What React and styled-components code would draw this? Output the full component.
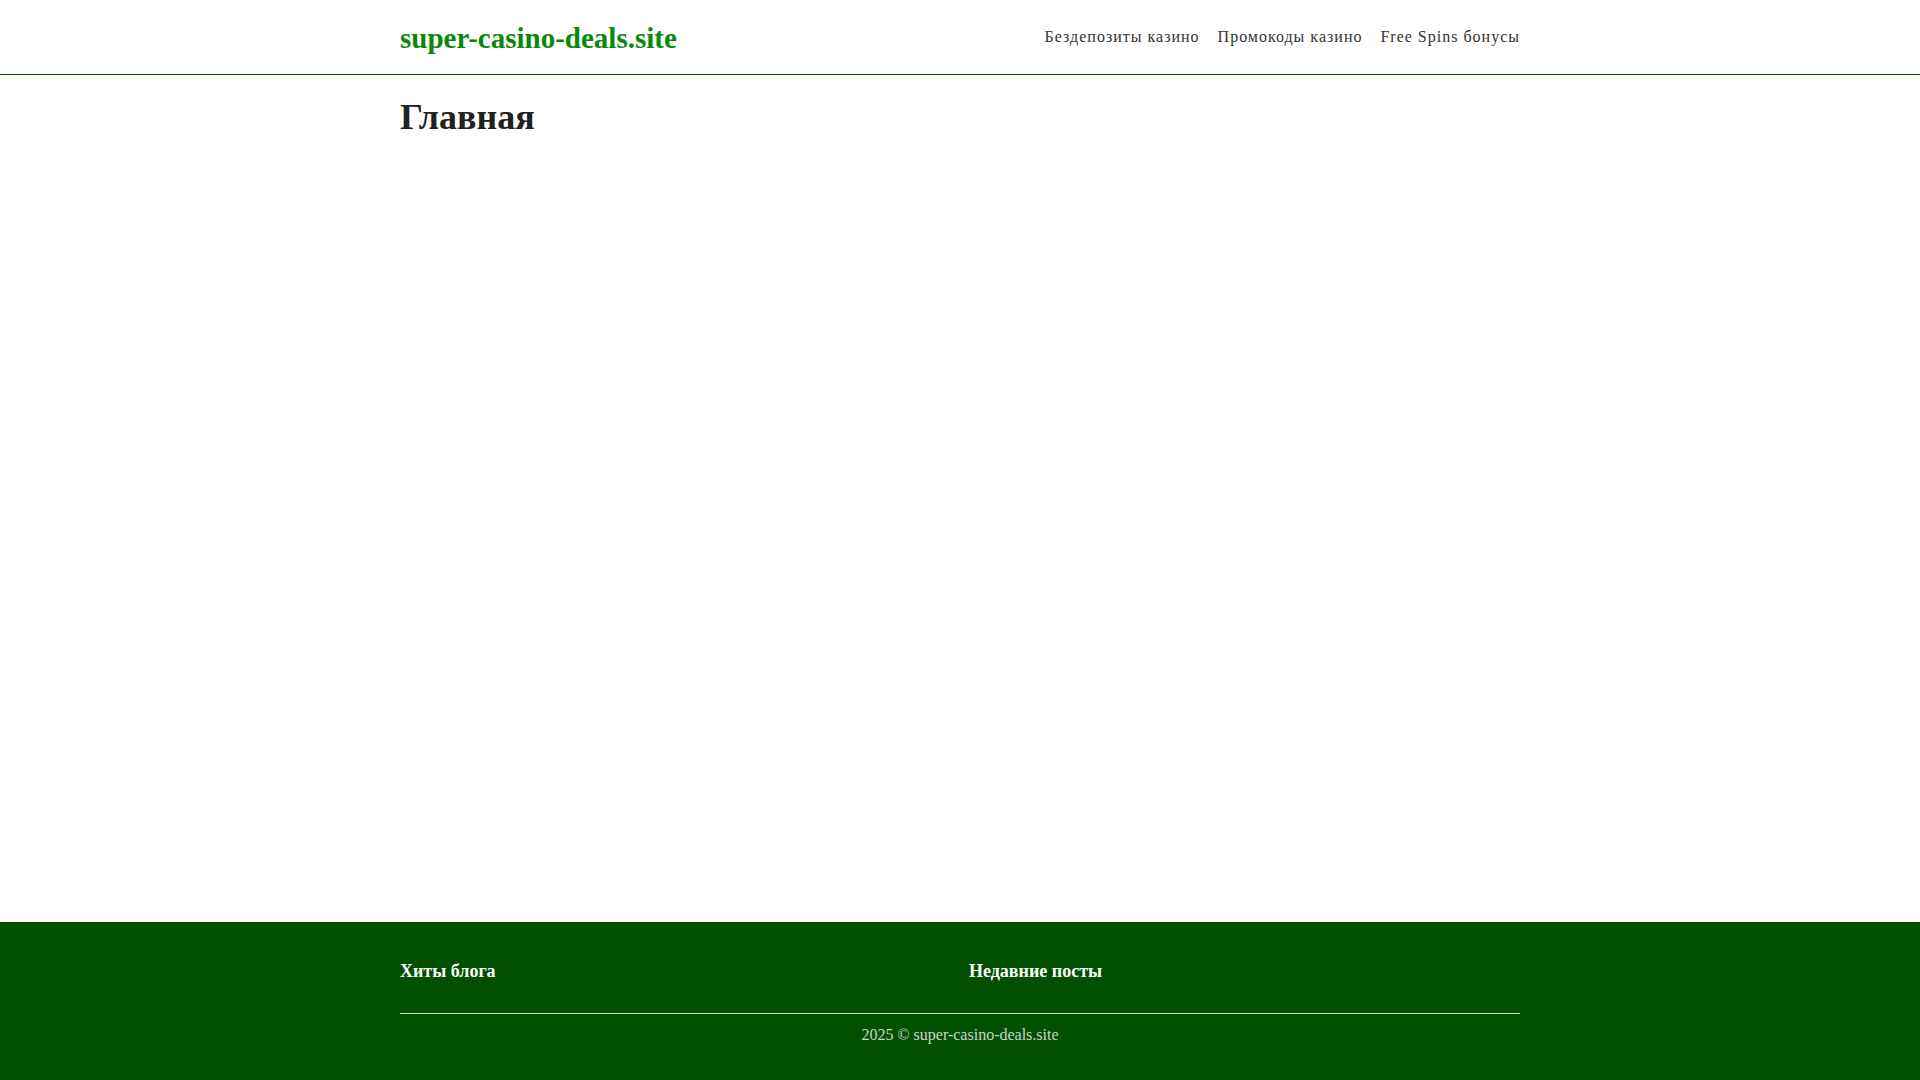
import React from "react";
import styled, { createGlobalStyle } from "styled-components";

const GlobalStyle = createGlobalStyle`
  html, body { margin: 0; padding: 0; background: #fff; }
  body { font-family: "Liberation Serif", "Times New Roman", serif; color: #222; }
  * { box-sizing: border-box; }
`;

const Page = styled.div`
  min-height: 100vh;
  display: flex;
  flex-direction: column;
`;

const Container = styled.div`
  width: 1120px;
  margin: 0 auto;
`;

const Header = styled.header`
  border-bottom: 1px solid #005000;
`;

const HeaderInner = styled(Container)`
  height: 74px;
  display: flex;
  align-items: center;
  justify-content: space-between;
`;

const Logo = styled.a`
  font-size: 29px;
  font-weight: 700;
  color: #078a07;
  text-decoration: none;
  line-height: 1;
  margin-top: 2px;
`;

const Nav = styled.nav`
  display: flex;
  gap: 18px;
`;

const NavLink = styled.a`
  font-size: 16px;
  letter-spacing: 1px;
  color: #333;
  text-decoration: none;
`;

const Main = styled.main`
  flex: 1;
`;

const Title = styled.h1`
  margin: 21px 0 0;
  font-size: 36px;
  line-height: 43px;
  font-weight: 700;
  color: #222;
`;

const Footer = styled.footer`
  background: #005000;
  padding: 37px 0 33px;
`;

const FooterCols = styled.div`
  display: grid;
  grid-template-columns: 1fr 1fr;
  gap: 18px;
  padding-bottom: 30px;
  border-bottom: 1px solid #d8d8d8;
`;

const FooterHeading = styled.h3`
  margin: 0;
  font-size: 18px;
  line-height: 24px;
  font-weight: 700;
  color: #fff;
`;

const Copyright = styled.div`
  margin-top: 9px;
  text-align: center;
  font-size: 16px;
  line-height: 24px;
  color: #cfcfcf;
`;

export default function App() {
  return (
    <Page>
      <GlobalStyle />
      <Header>
        <HeaderInner>
          <Logo href="#">super-casino-deals.site</Logo>
          <Nav>
            <NavLink href="#">Бездепозиты казино</NavLink>
            <NavLink href="#">Промокоды казино</NavLink>
            <NavLink href="#">Free Spins бонусы</NavLink>
          </Nav>
        </HeaderInner>
      </Header>
      <Main>
        <Container>
          <Title>Главная</Title>
        </Container>
      </Main>
      <Footer>
        <Container>
          <FooterCols>
            <FooterHeading>Хиты блога</FooterHeading>
            <FooterHeading>Недавние посты</FooterHeading>
          </FooterCols>
          <Copyright>2025 © super-casino-deals.site</Copyright>
        </Container>
      </Footer>
    </Page>
  );
}
